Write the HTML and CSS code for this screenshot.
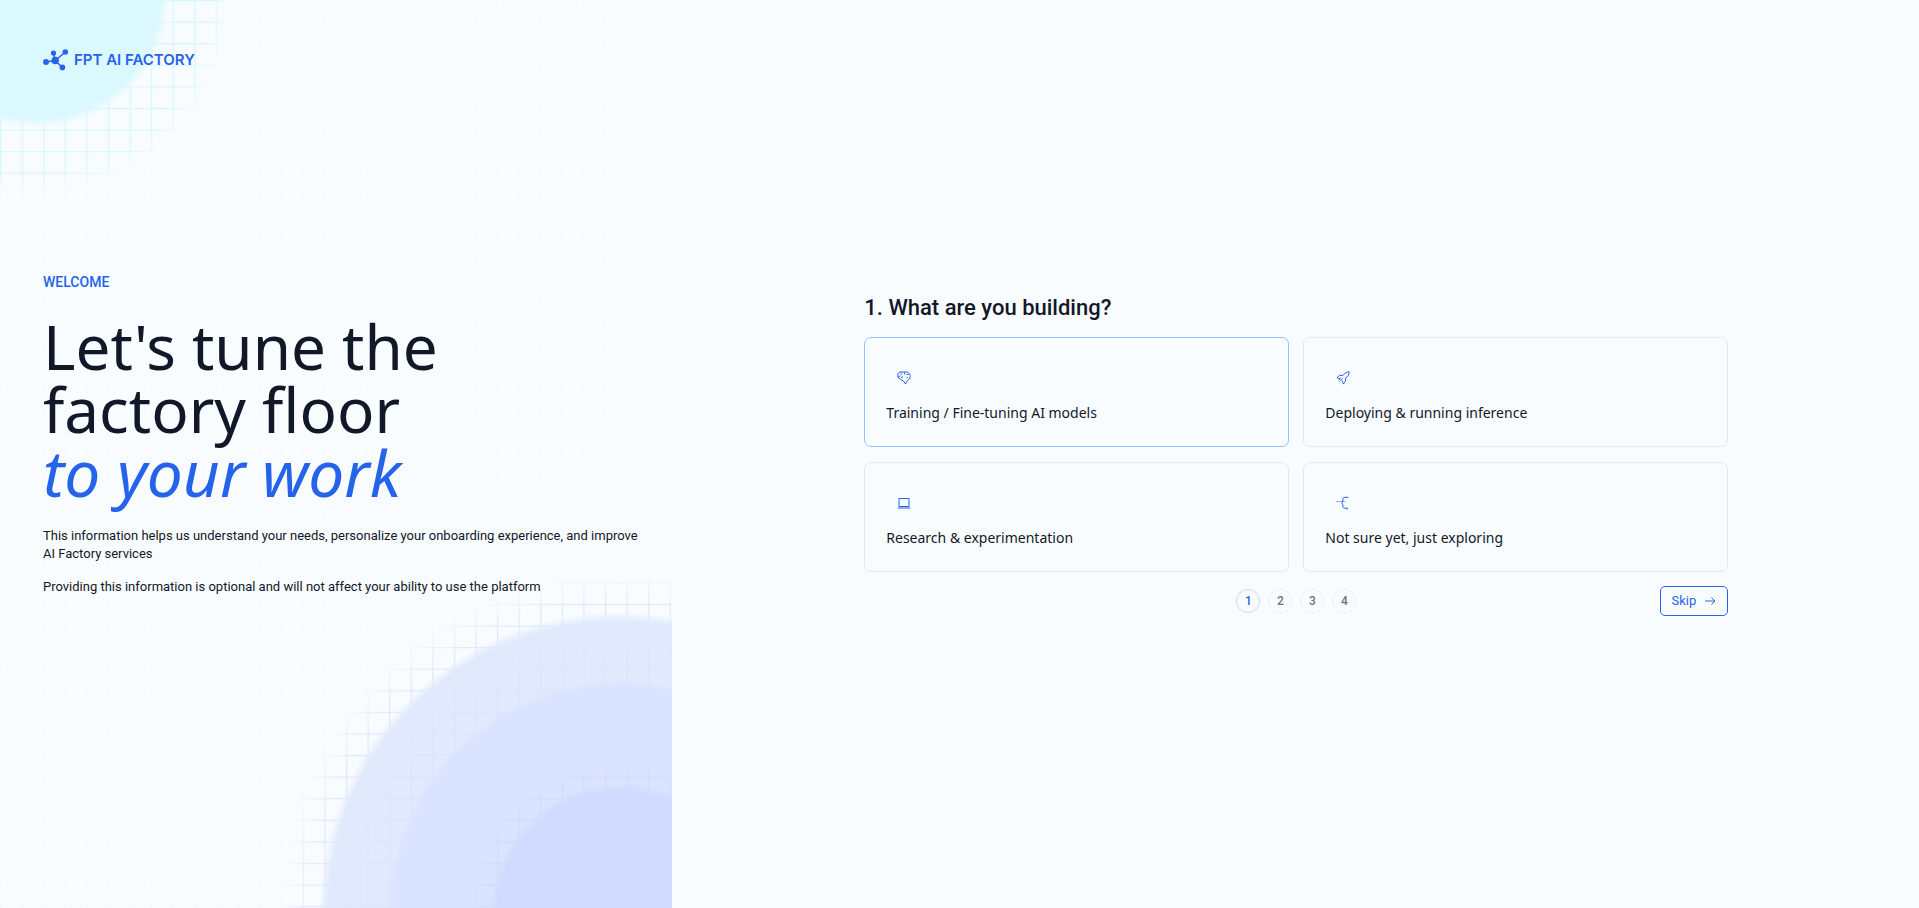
FILE: index.html
```
<!DOCTYPE html>
<html lang="en">
<head>
  <meta charset="UTF-8" />
  <meta name="viewport" content="width=device-width, initial-scale=1.0" />
  <title>FPT AI Factory - Welcome</title>
  <link rel="stylesheet" href="styles.css">
</head>
<body>
  <div class="page">
    <aside class="intro">
      <svg class="intro-bg" width="100%" height="100%" aria-hidden="true">
        <defs>
          <pattern id="dots" width="21.58" height="21.58" patternUnits="userSpaceOnUse">
            <rect width="1" height="1" fill="#e6edf6" />
          </pattern>
          <pattern id="gridCyan" width="21.58" height="21.58" patternUnits="userSpaceOnUse">
            <path d="M0 0H21.58V1.3H1.3V21.58H0Z" fill="#d6f7ff" />
          </pattern>
          <pattern id="gridOuter" x="-2" y="-2" width="21.58" height="21.58" patternUnits="userSpaceOnUse">
            <path d="M0 0H21.58V1.3H1.3V21.58H0Z" fill="#dfe8fd" />
          </pattern>
          <pattern id="gridMiddle" x="-2" y="-2" width="21.58" height="21.58" patternUnits="userSpaceOnUse">
            <path d="M0 0H21.58V1.3H1.3V21.58H0Z" fill="#dae3ff" />
          </pattern>
          <pattern id="gridInner" x="-2" y="-2" width="21.58" height="21.58" patternUnits="userSpaceOnUse">
            <path d="M0 0H21.58V1.3H1.3V21.58H0Z" fill="#d1daff" />
          </pattern>
          <radialGradient id="fade">
            <stop offset="0.9" stop-color="#fff" />
            <stop offset="1" stop-color="#fff" stop-opacity="0" />
          </radialGradient>
          <radialGradient id="discCyan">
            <stop offset="0.93" stop-color="#dbf8ff" />
            <stop offset="1" stop-color="#dbf8ff" stop-opacity="0" />
          </radialGradient>
          <radialGradient id="discOuter">
            <stop offset="0.97" stop-color="#e1eafd" />
            <stop offset="1" stop-color="#e1eafd" stop-opacity="0" />
          </radialGradient>
          <radialGradient id="discMiddle">
            <stop offset="0.96" stop-color="#dae3ff" />
            <stop offset="1" stop-color="#dae3ff" stop-opacity="0" />
          </radialGradient>
          <radialGradient id="discInner">
            <stop offset="0.93" stop-color="#d1daff" />
            <stop offset="1" stop-color="#d1daff" stop-opacity="0" />
          </radialGradient>
          <mask id="maskCyan" maskUnits="userSpaceOnUse" x="0" y="0" width="300" height="300">
            <circle cx="34" cy="-2" r="198" fill="url(#fade)" />
          </mask>
          <mask id="maskOuter" maskUnits="userSpaceOnUse" x="-460" y="-400" width="460" height="400">
            <circle cx="-52" cy="5" r="342" fill="url(#fade)" />
          </mask>
          <mask id="maskMiddle" maskUnits="userSpaceOnUse" x="-460" y="-400" width="460" height="400">
            <circle cx="-52" cy="5" r="284" fill="url(#fade)" />
          </mask>
          <mask id="maskInner" maskUnits="userSpaceOnUse" x="-460" y="-400" width="460" height="400">
            <circle cx="-52" cy="5" r="152" fill="url(#fade)" />
          </mask>
        </defs>

        <rect width="100%" height="100%" fill="url(#dots)" />

        <rect width="300" height="300" fill="url(#gridCyan)" mask="url(#maskCyan)" />
        <circle cx="36" cy="-6" r="134" fill="url(#discCyan)" />

        <!-- drawn from the bottom right corner -->
        <svg x="100%" y="100%" overflow="visible">
          <rect x="-460" y="-400" width="460" height="400" fill="url(#gridOuter)" mask="url(#maskOuter)" />
          <circle cx="-52" cy="5" r="301" fill="url(#discOuter)" />
          <rect x="-460" y="-400" width="460" height="400" fill="url(#gridMiddle)" mask="url(#maskMiddle)" />
          <circle cx="-52" cy="5" r="234" fill="url(#discMiddle)" />
          <rect x="-460" y="-400" width="460" height="400" fill="url(#gridInner)" mask="url(#maskInner)" />
          <circle cx="-52" cy="5" r="130" fill="url(#discInner)" />
        </svg>
      </svg>

      <a class="logo" href="#">
        <svg width="26" height="24" viewBox="0 0 26 24" aria-hidden="true">
          <path d="M3 14L12 12.500L22.500 4M10.500 5L12 12.500L19.500 19.500" fill="none" stroke="#2563eb" stroke-width="1.500" />
          <g fill="#2563eb">
            <circle cx="3" cy="14" r="2.900" />
            <circle cx="10.500" cy="5" r="2.600" />
            <circle cx="22.300" cy="4" r="2.800" />
            <circle cx="12.200" cy="12.500" r="3.700" />
            <circle cx="19.400" cy="19.400" r="2.800" />
          </g>
        </svg>
        <span>FPT AI FACTORY</span>
      </a>

      <div class="intro-text">
        <p class="welcome">WELCOME</p>
        <h1>Let's tune the<br>factory floor<br><em>to your work</em></h1>
        <p>This information helps us understand your needs, personalize your onboarding experience, and improve AI Factory services</p>
        <p>Providing this information is optional and will not affect your ability to use the platform</p>
      </div>
    </aside>

    <main class="survey">
      <div class="survey-inner">
        <h2>1. What are you building?</h2>

        <div class="options">
          <button type="button" class="option active">
            <svg class="icon" viewBox="0 0 14 14" aria-hidden="true">
              <path d="M3 1H10.500C11.500 1.200 12 2 12 3C13.300 3.500 13.500 5 13 6C13.200 7.500 12.500 8.500 11.300 8.800C10.800 9.800 10 10 9.500 10.300L8.500 13L6 9.500C4.500 9.500 3.500 8.500 3 7.500C1.500 7.500 .6 6.500 1 5C.3 3.500 1 1.500 3 1ZM3.500 3.500L5 2.500M7.500 1.500V3.500M9.500 3.500L11.500 3.500M1.500 5.500L3.500 5M4 7L6 5.500M9.500 7L11 6" />
            </svg>
            <span>Training / Fine-tuning AI models</span>
          </button>

          <button type="button" class="option">
            <svg class="icon" viewBox="0 0 14 14" aria-hidden="true">
              <path d="M4.600 7.700L.9 6.800L3.500 4.300L6.800 4.500C8.500 2.300 10.500 .9 13.200 .8C13.300 3.200 11.800 5.500 9.500 7.300L9.300 10.500L7.300 13.100L6.300 9.600M6.500 7.500L3.500 10.500M4.300 7.500L2.500 8.800" />
            </svg>
            <span>Deploying &amp; running inference</span>
          </button>

          <button type="button" class="option">
            <svg class="icon" viewBox="0 0 14 14" aria-hidden="true">
              <path d="M2 2.500H12V10.500H2ZM.5 12H13.500" />
            </svg>
            <span>Research &amp; experimentation</span>
          </button>

          <button type="button" class="option">
            <svg class="icon" viewBox="0 0 14 14" aria-hidden="true">
              <path d="M12.500 1.300H9C7.500 1.300 6.800 2.200 6.800 3.500V5L5.800 7L6.800 8.500V10C6.800 11.300 7.500 12.200 9 12.200H11.500V13.500" />
              <path d="M.5 5.500H10" stroke-dasharray="2 1" opacity="0.7" />
            </svg>
            <span>Not sure yet, just exploring</span>
          </button>
        </div>

        <div class="footer">
          <ol class="steps">
            <li class="current">1</li>
            <li>2</li>
            <li>3</li>
            <li>4</li>
          </ol>
          <button type="button" class="skip">
            Skip
            <svg width="12" height="12" viewBox="0 0 12 12" aria-hidden="true">
              <path d="M1 6H11M7.500 2.500L11 6L7.500 9.500" fill="none" stroke="currentColor" />
            </svg>
          </button>
        </div>
      </div>
    </main>
  </div>
</body>
</html>
```
FILE: styles.css
```
* {
  box-sizing: border-box;
}
body {
  margin: 0;
  font-family: Roboto, "Liberation Sans", sans-serif;
  background-color: #f9fcff;
  color: #111827;
}
.page {
  display: flex;
  min-height: 100vh;
}
.intro {
  position: relative;
  width: 35%;
  padding: 48px 24px 48px 43px;
  overflow: hidden;
}
.intro-bg {
  position: absolute;
  top: 0;
  left: 0;
}
.logo,
.intro-text {
  position: relative;
}
.logo {
  display: inline-flex;
  align-items: center;
  gap: 5px;
  color: #2563eb;
  font-family: Inter, sans-serif;
  font-size: 15px;
  font-weight: 600;
  line-height: 24px;
  text-decoration: none;
}
.intro-text {
  margin-top: 197px;
}
.intro-text p {
  margin: 0 0 15px;
  font-size: 13px;
  line-height: 18px;
}
.intro-text .welcome {
  margin-bottom: 24px;
  color: #2563eb;
  font-size: 14px;
  font-weight: 500;
}
h1 {
  margin: 0 0 22px;
  font-family: "Noto Sans", sans-serif;
  font-size: 62px;
  font-weight: 400;
  line-height: 63px;
}
h1 em {
  color: #2563eb;
  font-size: 64px;
}
.survey {
  flex: 1;
  display: flex;
  align-items: center;
  justify-content: center;
  padding: 24px 24px 24px 26px;
}
.survey-inner {
  width: 100%;
  max-width: 864px;
}
h2 {
  margin: 0 0 14px;
  font-size: 22px;
  font-weight: 500;
  line-height: 30px;
}
.options {
  display: grid;
  grid-template-columns: 1fr 1fr;
  gap: 15px 14px;
}
.option {
  display: flex;
  flex-direction: column;
  gap: 16px;
  padding: 33px 21px 21px;
  background: none;
  border: 1px solid #e0e7ff;
  border-radius: 7px;
  color: #111827;
  font-family: "Noto Sans", sans-serif;
  font-size: 14px;
  line-height: 24px;
  text-align: left;
  cursor: pointer;
}
.option:hover,
.option.active {
  border-color: #93c5fd;
}
.icon {
  width: 14px;
  height: 14px;
  margin-left: 11px;
  fill: none;
  stroke: #2563eb;
}
.footer {
  display: grid;
  grid-template-columns: 1fr auto 1fr;
  align-items: center;
  margin-top: 14px;
}
.steps {
  grid-column: 2;
  display: flex;
  gap: 8px;
  margin: 0;
  padding: 0;
  list-style: none;
}
.steps li {
  width: 24px;
  height: 24px;
  border: 1px dashed #e0e7ff;
  border-radius: 50%;
  color: #6b7280;
  font-size: 12px;
  font-weight: 500;
  line-height: 22px;
  text-align: center;
}
.steps .current {
  border: 1px solid #c7d7fe;
  color: #2563eb;
}
.skip {
  justify-self: end;
  display: flex;
  align-items: center;
  gap: 8px;
  padding: 0 11px;
  background: none;
  border: 1px solid #2563eb;
  border-radius: 5px;
  color: #2563eb;
  font-family: inherit;
  font-size: 13px;
  line-height: 28px;
  cursor: pointer;
}
```
